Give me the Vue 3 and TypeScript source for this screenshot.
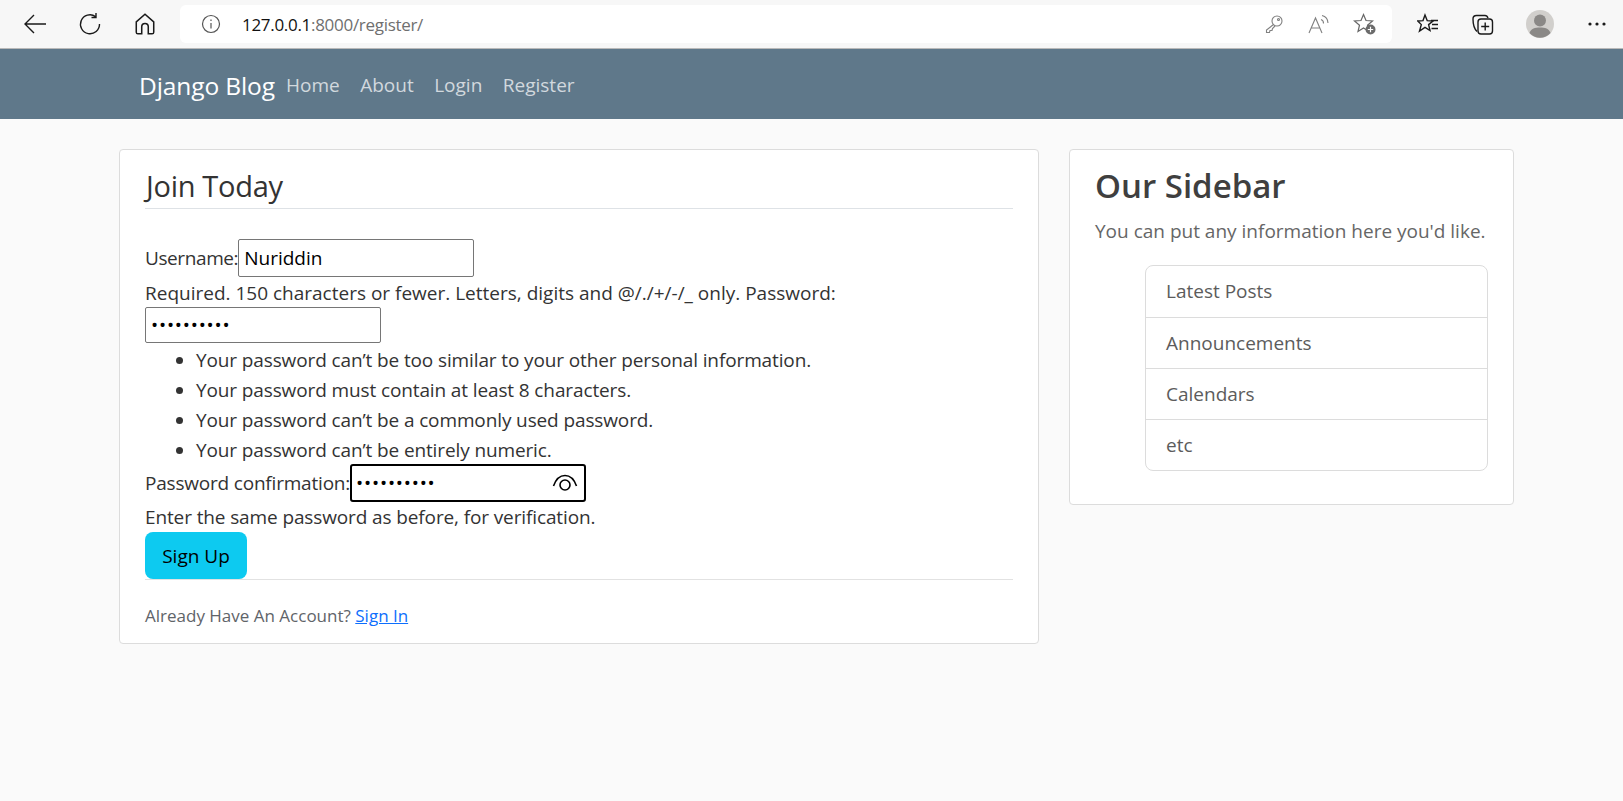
<script setup lang="ts">
const navLinks: string[] = ['Home', 'About', 'Login', 'Register']
const rules: string[] = [
  'Your password can’t be too similar to your other personal information.',
  'Your password must contain at least 8 characters.',
  'Your password can’t be a commonly used password.',
  'Your password can’t be entirely numeric.',
]
const sideItems: string[] = ['Latest Posts', 'Announcements', 'Calendars', 'etc']
</script>

<template>
  <div class="page">
    <div class="chrome">
      <svg class="ic back" width="26" height="26" viewBox="0 0 26 26" fill="none" stroke="#1a1a1a" stroke-width="1.4"><path d="M3 13H24M12 4L3 13L12 22"/></svg>
      <svg class="ic reload" width="24" height="24" viewBox="0 0 24 24" fill="none" stroke="#1a1a1a" stroke-width="1.4"><path d="M17.5 4.5A9.5 9.5 0 1 0 21.5 12M18 1v4.5h-4.5"/></svg>
      <svg class="ic home" width="22" height="24" viewBox="0 0 20 22" fill="none" stroke="#1a1a1a" stroke-width="1.4"><path d="M2 9L10 2L18 9V18.5A1.5 1.5 0 0 1 16.5 20H13V13.5A3 3 0 0 0 7 13.5V20H3.5A1.5 1.5 0 0 1 2 18.5Z"/></svg>
      <div class="omnibox">
        <svg class="info" width="20" height="20" viewBox="0 0 20 20" fill="none" stroke="#555" stroke-width="1.2"><circle cx="10" cy="10" r="8.5"/><path d="M10 9V14.5M10 5.5V7"/></svg>
        <span class="url"><span class="host">127.0.0.1</span>:8000/register/</span>
        <span class="spacer"></span>
        <svg width="20" height="20" viewBox="0 0 20 20" fill="none" stroke="#808080" stroke-width="1.1"><circle cx="13" cy="7" r="5"/><circle cx="14.5" cy="5.5" r="1"/><path d="M9.5 10.5L2.5 16V18.5H5.5L6 16.5H8L8.5 14.5L11 12"/></svg>
        <svg class="read" width="22" height="20" viewBox="0 0 22 20" fill="none" stroke="#808080" stroke-width="1.1"><path d="M1 19L7.5 4L14 19M3.5 14H11.5M13 5.5A4 4 0 0 1 15.5 9.5M14 1.5A8 8 0 0 1 20 9"/></svg>
        <svg class="fav" width="24" height="24" viewBox="0 0 24 24" fill="none"><path d="M10.5 2.5L13 8.5L19.5 9L14.5 13.2L16 19.5L10.5 16L5 19.5L6.5 13.2L1.5 9L8 8.5Z" stroke="#666" stroke-width="1.2"/><circle cx="17.5" cy="17.5" r="5" fill="#6b6b6b"/><path d="M17.5 14.8V20.2M14.8 17.5H20.2" stroke="#fff" stroke-width="1.2"/></svg>
      </div>
      <svg class="ic favs" width="22" height="22" viewBox="0 0 22 22" fill="none" stroke="#1a1a1a" stroke-width="1.4"><path d="M8 2L10.2 7.6L16 8L11.6 11.6L13 17.5L8 14.3L2.5 18L4.3 11.6L0.8 8L6 7.6Z"/><path d="M14 7.5H21M15 11.5H21M14.5 15.5H21"/></svg>
      <svg class="ic coll" width="22" height="22" viewBox="0 0 22 22" fill="none" stroke="#1a1a1a" stroke-width="1.4"><path d="M5 18.5C2.5 16 1 12 1 6C1 4 2.5 2.5 4.5 2.5H13C14.5 2.5 15.5 3.5 16 5"/><rect x="6" y="6" width="14.5" height="15" rx="3"/><path d="M13.2 9.5V17.5M9.2 13.5H17.2"/></svg>
      <div class="avatar">
        <svg width="28" height="28" viewBox="0 0 28 28"><circle cx="14" cy="14" r="14" fill="#d1cfcc"/><circle cx="14" cy="10.5" r="6" fill="#8a8886"/><path d="M3.5 23C5 18.5 9 17.5 14 17.5C19 17.5 23 18.5 24.5 23A14 14 0 0 1 3.5 23Z" fill="#8a8886"/></svg>
      </div>
      <svg class="ic more" width="18" height="4" viewBox="0 0 18 4" fill="#1a1a1a"><circle cx="2" cy="2" r="1.6"/><circle cx="9" cy="2" r="1.6"/><circle cx="16" cy="2" r="1.6"/></svg>
    </div>

    <nav class="navbar">
      <a class="brand">Django Blog</a>
      <a v-for="link in navLinks" :key="link" class="nav-link">{{ link }}</a>
    </nav>

    <main class="content">
      <section class="card main-card">
        <h2 class="legend">Join Today</h2>
        <form class="form" @submit.prevent>
          <div class="row user-row">
            <label class="user-label">Username:</label><input class="field user" type="text" value="Nuriddin" />
          </div>
          <div class="required">Required. 150 characters or fewer. Letters, digits and @/./+/-/_ only. Password:</div>
          <input class="field pass" type="password" value="••••••••••" />
          <ul class="rules">
            <li v-for="rule in rules" :key="rule">{{ rule }}</li>
          </ul>
          <div class="row confirm-row">
            <label class="confirm-label">Password confirmation:</label><span class="confirm-wrap">
              <input class="field confirm" type="password" value="••••••••••" />
              <svg class="eye" width="26" height="18" viewBox="0 0 26 18" fill="none" stroke="#000" stroke-width="1.6"><path d="M1.5 13C4 6 8 2.5 13 2.5C18 2.5 22 6 24.5 13"/><circle cx="13" cy="12" r="5"/></svg>
            </span>
          </div>
          <div class="same">Enter the same password as before, for verification.</div>
          <button class="signup" type="button">Sign Up</button>
        </form>
        <div class="footer-line">
          Already Have An Account? <a class="signin">Sign In</a>
        </div>
      </section>

      <aside class="card side-card">
        <h3 class="side-title">Our Sidebar</h3>
        <p class="side-text">You can put any information here you'd like.</p>
        <ul class="side-list">
          <li v-for="item in sideItems" :key="item">{{ item }}</li>
        </ul>
      </aside>
    </main>
  </div>
</template>

<style>
html, body { margin: 0; background: #fafafa; }
</style>

<style scoped>
.page {
  height: 801px;
  overflow: hidden;
  background: #fafafa;
  color: #333;
  font-family: "Open Sans", "Noto Sans", sans-serif;
  font-size: 19px;
}
.chrome {
  height: 48px;
  border-bottom: 1px solid #b9b9b9;
  background: #f7f7f7;
  display: flex;
  align-items: center;
  padding-left: 22px;
  box-sizing: content-box;
}
.ic { flex: none; }
.reload { margin-left: 30px; }
.home { margin-left: 32px; }
.omnibox {
  margin-left: 24px;
  width: 1212px;
  height: 38px;
  box-sizing: border-box;
  background: #fff;
  border-radius: 6px;
  display: flex;
  align-items: center;
  padding: 0 15px 0 21px;
}
.url { margin-left: 21px; font-size: 17px; color: #6f6f6f; letter-spacing: -0.3px; }
.host { color: #111; }
.spacer { flex: 1; }
.read { margin-left: 24px; }
.fav { margin-left: 23px; }
.favs { margin-left: 25px; }
.coll { margin-left: 33px; }
.avatar { margin-left: 32px; height: 28px; }
.more { margin-left: 34px; }

.navbar {
  height: 70px;
  box-sizing: border-box;
  padding: 2px 0 0 139px;
  background: #5f788a;
  display: flex;
  align-items: center;
}
.brand { color: #fff; font-size: 24.5px; margin-right: 11px; letter-spacing: -0.1px; }
.nav-link { color: rgba(255, 255, 255, 0.72); font-size: 19px; margin-right: 20.5px; }

.content {
  display: flex;
  align-items: flex-start;
  padding: 30px 0 0 119px;
}
.card {
  box-sizing: border-box;
  background: #fff;
  border: 1px solid #dcdcdc;
  border-radius: 4px;
}
.main-card {
  width: 920px;
  height: 495px;
  padding: 0 25px;
  margin-right: 30px;
}
.legend {
  margin: 0;
  height: 59px;
  box-sizing: border-box;
  padding: 13px 0 0 1px;
  font-weight: 400;
  font-size: 29px;
  line-height: 46px;
  border-bottom: 1px solid #dee2e6;
  letter-spacing: -0.3px;
}
.form {
  padding-top: 30px;
  line-height: 30px;
  border-bottom: 1px solid #e2e2e2;
}
.row { height: 38px; line-height: 38px; white-space: nowrap; }
.user-label { letter-spacing: -0.4px; }
.confirm-label { letter-spacing: -0.2px; }
.required { margin-top: 1px; height: 29px; }
.same { letter-spacing: -0.12px; }
.field {
  font: inherit;
  color: #000;
  background: #fff;
  box-sizing: border-box;
  border: 1px solid #767676;
  border-radius: 2px;
  padding: 1px 5px;
  margin: 0;
  outline: none;
}
.user { width: 236px; height: 38px; }
.pass { width: 236px; height: 36px; display: block; letter-spacing: 0.8px; }
.rules { margin: 2px 0 -1px; padding: 0 0 0 51px; letter-spacing: -0.12px; }
.confirm-wrap { position: relative; display: inline-block; width: 236px; height: 38px; }
.confirm { width: 236px; height: 38px; border: 2px solid #000; border-radius: 3px; letter-spacing: 0.8px; padding-left: 4px; }
.eye { position: absolute; right: 8px; top: 9px; }
.signup {
  display: block;
  font: inherit;
  margin: 0;
  width: 102px;
  height: 47px;
  padding: 0;
  border: none;
  border-radius: 8px;
  background: #0dcaf0;
  color: #000;
}
.footer-line {
  padding-top: 21px;
  font-size: 17px;
  line-height: 30px;
  color: #5f6469;
}
.signin { color: #0d6efd; text-decoration: underline; }

.side-card {
  width: 445px;
  height: 356px;
  padding: 0 25px;
}
.side-title {
  margin: 0;
  padding-top: 9px;
  font-size: 33px;
  line-height: 54px;
  font-weight: 600;
  color: #3f3f3f;
}
.side-text {
  margin: 3px 0 0;
  line-height: 30px;
  color: #666;
}
.side-list {
  list-style: none;
  margin: 19px -20px 0 50px;
  padding: 0;
  border: 1px solid #dcdcdc;
  border-radius: 8px;
  width: 343px;
  box-sizing: border-box;
  color: #5c5c5c;
}
.side-list li {
  height: 51px;
  line-height: 51px;
  padding-left: 20px;
  box-sizing: border-box;
}
.side-list li + li { border-top: 1px solid #dcdcdc; }
</style>
